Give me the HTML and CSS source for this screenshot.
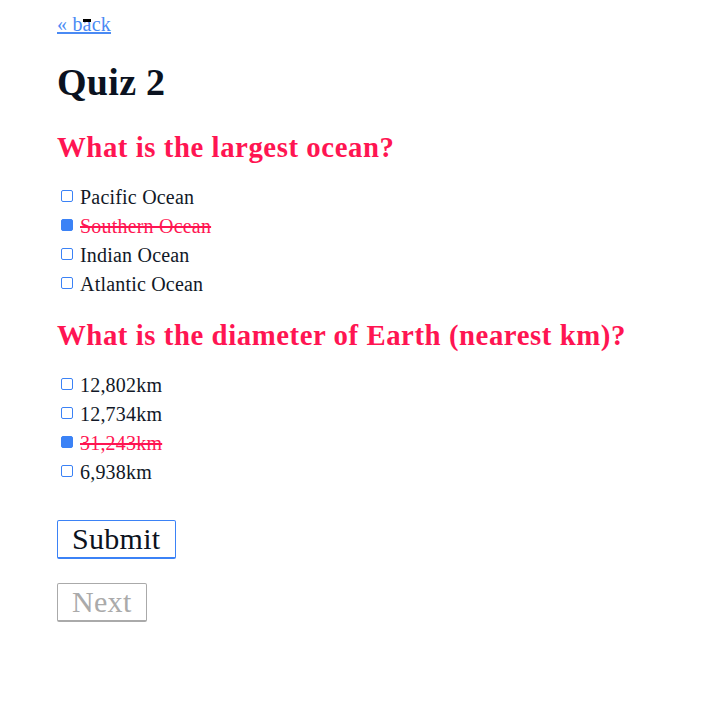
FILE: index.html
```html
<!DOCTYPE html>
<html>
<head>
<meta charset="utf-8">
<link rel="stylesheet" href="styles.css">
</head>
<body>
<main class="page">
  <div class="top">
    <a class="back" href="#">« back</a>
    <span class="marker"></span>
  </div>
  <h1 class="title">Quiz 2</h1>
  <section class="question">
    <h2 class="q-title">What is the largest ocean?</h2>
    <ul class="options">
      <li class="option"><span class="box"></span><span class="label">Pacific Ocean</span></li>
      <li class="option wrong"><span class="box checked"></span><span class="label">Southern Ocean</span></li>
      <li class="option"><span class="box"></span><span class="label">Indian Ocean</span></li>
      <li class="option"><span class="box"></span><span class="label">Atlantic Ocean</span></li>
    </ul>
  </section>
  <section class="question">
    <h2 class="q-title">What is the diameter of Earth (nearest km)?</h2>
    <ul class="options">
      <li class="option"><span class="box"></span><span class="label">12,802km</span></li>
      <li class="option"><span class="box"></span><span class="label">12,734km</span></li>
      <li class="option wrong"><span class="box checked"></span><span class="label">31,243km</span></li>
      <li class="option"><span class="box"></span><span class="label">6,938km</span></li>
    </ul>
  </section>
  <div class="actions">
    <button class="btn submit">Submit</button>
    <button class="btn next" disabled>Next</button>
  </div>
</main>
</body>
</html>
```
FILE: styles.css
```css
html, body {
  margin: 0;
  padding: 0;
  background: #ffffff;
}
body {
  font-family: "Liberation Serif", "DejaVu Serif", serif;
  color: #0b1220;
}
.page {
  padding: 12px 0 0 57px;
}
.top {
  position: relative;
  height: 24px;
}
.back {
  font-size: 20px;
  letter-spacing: 0.2px;
  color: #4a8af4;
  text-decoration: underline;
  line-height: 24px;
}
.marker {
  position: absolute;
  left: 26px;
  top: 7px;
  width: 8px;
  height: 3px;
  background: #000;
}
.title {
  font-size: 38px;
  letter-spacing: 0.3px;
  font-weight: bold;
  margin: 22px 0 0 0;
  line-height: 48px;
}
.question {
  margin-top: 23px;
}
.question + .question {
  margin-top: 18px;
}
.q-title {
  font-size: 28.8px;
  letter-spacing: 0.55px;
  font-weight: bold;
  color: #ff1552;
  margin: 0;
  line-height: 36px;
}
.options {
  list-style: none;
  margin: 18px 0 0 0;
  padding: 0;
  display: flex;
  flex-direction: column;
}
.option {
  display: flex;
  align-items: center;
  height: 29px;
  font-size: 20px;
  letter-spacing: 0.2px;
  color: #111827;
}
.box {
  width: 10px;
  height: 10px;
  border: 1px solid #3b82f6;
  border-radius: 2px;
  margin: 0 7px 0 4px;
  position: relative;
  top: -2px;
}
.box.checked {
  background: #3b82f6;
}
.wrong .label {
  color: #ff1552;
  text-decoration: line-through;
}
.actions {
  margin-top: 33px;
  display: flex;
  flex-direction: column;
  align-items: flex-start;
  gap: 24px;
}
.btn {
  font-family: "Liberation Serif", "DejaVu Serif", serif;
  font-size: 30px;
  letter-spacing: 0.3px;
  background: #fff;
  border-radius: 2px;
  padding: 0 14px;
  height: 39px;
  line-height: 36px;
}
.submit {
  border: 1px solid #3b82f6;
  border-bottom-width: 2px;
  color: #0b1220;
}
.next {
  border: 1px solid #aaaaaa;
  border-bottom-width: 2px;
  color: #aaaaaa;
}
```
